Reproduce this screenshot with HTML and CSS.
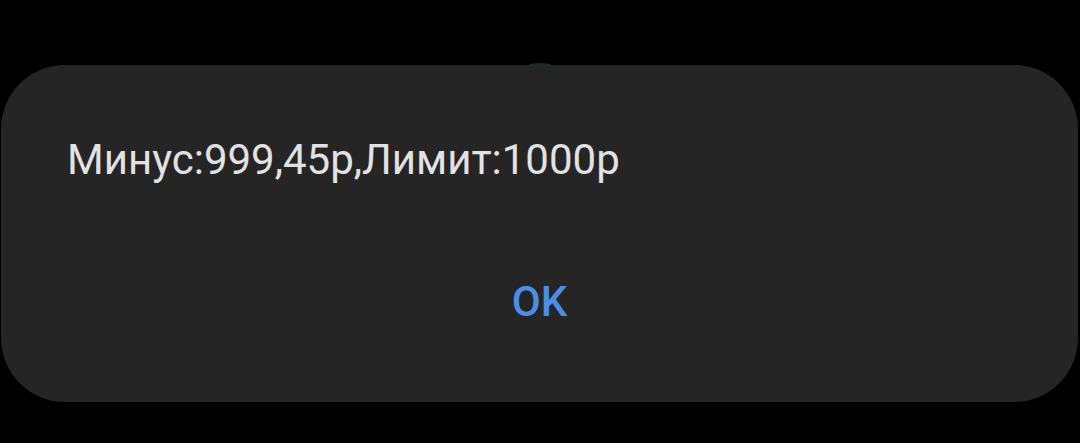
FILE: index.html
```html
<!DOCTYPE html>
<html>
<head>
<meta charset="utf-8">
<link rel="stylesheet" href="styles.css">
</head>
<body>
<div class="dialog">
  <span class="notch"></span>
  <div class="message">Минус:999,45р,Лимит:1000р</div>
  <div class="actions"><span class="ok">OK</span></div>
</div>
</body>
</html>
```
FILE: styles.css
```css
html, body {
  margin: 0;
  padding: 0;
  background: #000;
  width: 1080px;
  height: 443px;
  overflow: hidden;
}
body {
  padding-top: 65px;
  box-sizing: border-box;
  font-family: Roboto, "Noto Sans", sans-serif;
}
.dialog {
  position: relative;
  margin-left: 1px;
  width: 1077px;
  height: 337px;
  background: #252525;
  border-radius: 64px;
  box-sizing: border-box;
  padding: 74px 0 0 66px;
  display: flex;
  flex-direction: column;
}
.notch {
  position: absolute;
  top: -2px;
  left: 527px;
  width: 24px;
  height: 5px;
  border-radius: 50%;
  background: #1c2a28;
}
.message {
  color: #e2e2e2;
  font-size: 42px;
  line-height: 1;
}
.actions {
  display: flex;
  justify-content: center;
  margin-left: -66px;
  margin-top: 100px;
}
.ok {
  color: #4a8ee6;
  font-size: 42px;
  font-weight: 500;
  line-height: 1;
}
```
